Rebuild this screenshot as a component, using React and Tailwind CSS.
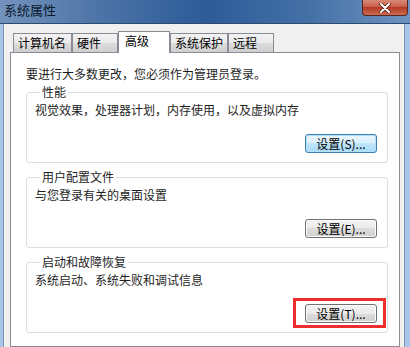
import React from 'react';

const TABS = [
  { label: '计算机名', w: 'w-[59px]' },
  { label: '硬件', w: 'w-[46px]' },
  { label: '高级', w: 'w-[52px]', active: true },
  { label: '系统保护', w: 'w-[58px]' },
  { label: '远程', w: 'w-[46px]' },
];

function Group({ title, desc, button, focused, marked, first }) {
  return (
    <fieldset className={`border border-[#d5dfe5] rounded-[3px] pl-[8px] pr-[10px] pb-[9px] ${first ? 'mt-[2px]' : 'mt-[6px]'}`}>
      <legend className="ml-[5px] px-[2px] leading-[16px] text-[#1e1e1e]">{title}</legend>
      <div className="mt-[2px] leading-[16px] text-[#1e1e1e]">{desc}</div>
      <div className="flex justify-end mt-[16px]">
        <div className="relative">
          <button
            className={`w-[72px] h-[19px] rounded-[3px] border text-[12px] leading-none flex items-center justify-center ${
              focused
                ? 'border-[#3c7fb1] bg-[linear-gradient(#eaf6fd,#d9f0fc_50%,#bee6fd_50%,#a7d9f5)] shadow-[inset_0_0_0_1px_#b3e0f9]'
                : 'border-[#707070] bg-[linear-gradient(#f2f2f2,#ebebeb_50%,#dddddd_50%,#cfcfcf)] shadow-[inset_0_0_0_1px_#fcfcfc]'
            }`}
          >
            {button}
          </button>
          {marked && (
            <div className="absolute left-[-12px] top-[-6px] right-[-9px] bottom-[-5px] border-[3px] border-[#ee2e2e]" />
          )}
        </div>
      </div>
    </fieldset>
  );
}

export default function App() {
  return (
    <div className="w-[410px] h-[347px] overflow-hidden flex flex-col bg-[#a9c6ea] font-['Noto_Sans_CJK_SC','Noto_Sans',sans-serif] text-[12px] text-black">
      {/* title bar */}
      <div className="h-[24px] shrink-0 flex justify-between border-b border-[#2c4b72] bg-[linear-gradient(90deg,#7393bd,#4c73a6_25%,#2c5b98_50%,#4470a6_75%,#6f93c0)]">
        <span className="pl-[4px] pt-[2px] leading-[16px] text-[13px] text-[#0b1a2e]">系统属性</span>
        <div className="mr-[2px] w-[46px] h-[16px] rounded-b-[4px] border border-t-0 border-[#5a2620] bg-[linear-gradient(#d98a7a,#c55a45_50%,#b33a26_50%,#cc6a50)] flex items-center justify-center">
          <svg width="12" height="10" viewBox="0 0 12 10">
            <path d="M2 1 L10 9 M10 1 L2 9" stroke="#4a1a14" strokeWidth="3.4" strokeLinecap="round" />
            <path d="M2 1 L10 9 M10 1 L2 9" stroke="#ffffff" strokeWidth="2" strokeLinecap="round" />
          </svg>
        </div>
      </div>

      {/* dialog body */}
      <div className="flex-1 flex flex-col ml-[3px] mr-[5px] border-l border-r border-[#7d93ae] bg-[#f0f0f0] pl-[6px] pr-[4px] pt-[7px]">
        <div className="flex pl-[3px] items-end">
          {TABS.map((t) =>
            t.active ? (
              <div
                key={t.label}
                className={`${t.w} h-[22px] -mb-px relative z-10 border border-b-0 border-[#898c95] bg-white pl-[6px] pt-[1px] leading-[16px]`}
              >
                {t.label}
              </div>
            ) : (
              <div
                key={t.label}
                className={`${t.w} h-[19px] border border-b-0 border-[#898c95] bg-[linear-gradient(#f2f2f2,#ebebeb_50%,#dddddd_50%,#cfcfcf)] pl-[4px] leading-[18px]`}
              >
                {t.label}
              </div>
            )
          )}
        </div>
        <div className="flex-1 border border-[#898c95] bg-white pl-[15px] pr-[11px] pt-[13px]">
          <div className="leading-[16px] text-[#1e1e1e]">要进行大多数更改，您必须作为管理员登录。</div>
          <Group first title="性能" desc="视觉效果，处理器计划，内存使用，以及虚拟内存" button="设置(S)..." focused />
          <Group title="用户配置文件" desc="与您登录有关的桌面设置" button="设置(E)..." />
          <Group title="启动和故障恢复" desc="系统启动、系统失败和调试信息" button="设置(T)..." marked />
        </div>
      </div>
    </div>
  );
}
